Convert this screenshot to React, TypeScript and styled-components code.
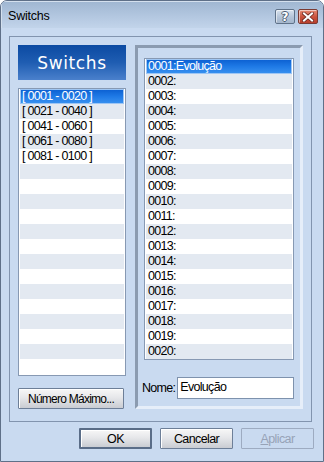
import React from "react";
import styled, { createGlobalStyle, css } from "styled-components";

const GlobalStyle = createGlobalStyle`
  html, body { margin: 0; padding: 0; background: #ffffff; }
  * { box-sizing: border-box; }
`;

const listFont = `"Liberation Sans", Arial, sans-serif`;

const Window = styled.div`
  width: 324px;
  height: 462px;
  border: 1px solid #5f7088;
  border-radius: 7px 7px 0 0;
  overflow: hidden;
  display: flex;
  flex-direction: column;
  background: #c9daf0;
`;

const TitleBar = styled.div`
  height: 27px;
  flex: none;
  display: flex;
  align-items: center;
  justify-content: space-between;
  padding: 0 5px 0 7px;
  background: linear-gradient(#9fb6d1, #b4c8e1 60%, #c2d4ea);
  box-shadow: inset 1px 1px 0 #d4e0ee;
`;

const Title = styled.span`
  font-family: "Liberation Sans", Arial, sans-serif;
  font-size: 12.5px;
  letter-spacing: -0.2px;
  color: #000;
  margin-top: 2px;
`;

const TitleButtons = styled.div`
  display: flex;
  gap: 3px;
  margin-top: 4px;
`;

const TitleButton = styled.div<{ $close?: boolean }>`
  width: 20px;
  height: 15px;
  border: 1px solid ${(p) => (p.$close ? "#7a3a32" : "#5f7289")};
  border-radius: 2px;
  display: flex;
  align-items: center;
  justify-content: center;
  background: ${(p) =>
    p.$close
      ? "linear-gradient(#e58a74, #c9503a 55%, #b8402e)"
      : "linear-gradient(#d8e2ee, #b4c4d8 55%, #a4b6cc)"};
  box-shadow: inset 1px 1px 0 rgba(255, 255, 255, 0.55);
`;

const HelpGlyph = styled.span`
  font-family: "DejaVu Sans", sans-serif;
  font-weight: bold;
  font-size: 12px;
  color: #ffffff;
  line-height: 1;
  text-shadow: -1px 0 #4d5d72, 1px 0 #4d5d72, 0 -1px #4d5d72, 0 1px #4d5d72;
`;

const Client = styled.div`
  flex: 1;
  display: flex;
  flex-direction: column;
  padding: 8px 9px 12px 8px;
`;

const GroupBox = styled.div`
  height: 386px;
  margin-right: 2px;
  border: 1px solid #8294ae;
  padding: 8px 8px 12px 8px;
  display: flex;
  gap: 9px;
`;

const LeftColumn = styled.div`
  width: 108px;
  display: flex;
  flex-direction: column;
`;

const Header = styled.div`
  height: 35px;
  display: flex;
  align-items: center;
  justify-content: center;
  background: linear-gradient(#0b4aa2, #1f5db2 50%, #4a80cc);
  color: #ffffff;
  font-family: "DejaVu Sans", sans-serif;
  font-size: 17px;
  letter-spacing: 0.6px;
  padding-top: 1px;
`;

const ListBox = styled.div<{ $h: number }>`
  height: ${(p) => p.$h}px;
  background: #ffffff;
  border: 1px solid #8799b3;
  padding: 0 1px;
  overflow: hidden;
`;

const Row = styled.div<{ $alt: boolean; $sel: boolean }>`
  height: 15px;
  line-height: 15px;
  padding-left: 2px;
  font-family: ${listFont};
  font-size: 12.5px;
  letter-spacing: -0.7px;
  color: #000;
  white-space: nowrap;
  background: ${(p) => (p.$alt ? "#e3e9f1" : "#ffffff")};
  ${(p) =>
    p.$sel &&
    css`
      color: #ffffff;
      background: linear-gradient(#0a5ed0, #1f7ae6 50%, #3a92f0);
      box-shadow: inset 0 0 0 1px #9ec6f4;
    `}
`;

const LeftList = styled(ListBox)`
  margin-top: 8px;
`;

const Button = styled.button<{ $default?: boolean; $disabled?: boolean }>`
  height: 21px;
  width: 73px;
  padding: 0;
  font-family: ${listFont};
  font-size: 12.5px;
  letter-spacing: -0.6px;
  color: #000;
  border: 1px solid #6d7f98;
  border-radius: 1px;
  background: linear-gradient(#f7f7f7, #e6e7ea 45%, #c9ccd2);
  box-shadow: inset 1px 1px 0 #ffffff;
  ${(p) =>
    p.$default &&
    css`
      border: 2px solid #5a6d88;
      box-shadow: inset 1px 1px 0 #ffffff;
    `}
  ${(p) =>
    p.$disabled &&
    css`
      color: #97a3b7;
      border-color: #9dabc1;
      background: #c9daf0;
      box-shadow: none;
    `}
`;

const WideButton = styled(Button)`
  width: 106px;
  margin-top: 12px;
  font-size: 12px;
  letter-spacing: -0.75px;
`;

const RightPanel = styled.div`
  width: 168px;
  border: 3px solid;
  border-color: #8b9bb0 #e6eef9 #e6eef9 #8b9bb0;
  padding: 10px 6px 0 6px;
  display: flex;
  flex-direction: column;
`;

const NameRow = styled.div`
  margin-top: 17px;
  margin-left: -2px;
  display: flex;
  align-items: center;
  gap: 2px;
`;

const Label = styled.span`
  font-family: ${listFont};
  font-size: 12.5px;
  letter-spacing: -0.7px;
  color: #000;
`;

const TextInput = styled.div`
  flex: 1;
  height: 22px;
  background: #ffffff;
  border: 1px solid #7e92ad;
  padding-left: 2px;
  line-height: 19px;
  font-family: ${listFont};
  font-size: 12.5px;
  letter-spacing: -0.7px;
  color: #000;
`;

const ButtonRow = styled.div`
  margin-top: 6px;
  display: flex;
  justify-content: flex-end;
  gap: 8px;
`;

const Underline = styled.span`
  text-decoration: underline;
`;

const ranges = [
  "[ 0001 - 0020 ]",
  "[ 0021 - 0040 ]",
  "[ 0041 - 0060 ]",
  "[ 0061 - 0080 ]",
  "[ 0081 - 0100 ]",
];

const items = Array.from({ length: 20 }, (_, i) => {
  const n = String(i + 1).padStart(4, "0");
  return i === 0 ? `${n}:Evolução` : `${n}:`;
});

export default function App() {
  const leftRows = Array.from({ length: 19 }, (_, i) => ranges[i] ?? "");
  return (
    <>
      <GlobalStyle />
      <Window>
        <TitleBar>
          <Title>Switchs</Title>
          <TitleButtons>
            <TitleButton>
              <HelpGlyph>?</HelpGlyph>
            </TitleButton>
            <TitleButton $close>
              <svg width="12" height="10" viewBox="0 0 12 10">
                <path d="M2 1.5 L10 8.5 M10 1.5 L2 8.5" stroke="#6a2a22" strokeWidth="3.6" strokeLinecap="square" />
                <path d="M2 1.5 L10 8.5 M10 1.5 L2 8.5" stroke="#ffffff" strokeWidth="2" strokeLinecap="square" />
              </svg>
            </TitleButton>
          </TitleButtons>
        </TitleBar>
        <Client>
          <GroupBox>
            <LeftColumn>
              <Header>Switchs</Header>
              <LeftList $h={288}>
                {leftRows.map((t, i) => (
                  <Row key={i} $alt={i % 2 === 1} $sel={i === 0}>
                    {t}
                  </Row>
                ))}
              </LeftList>
              <WideButton>Número Máximo...</WideButton>
            </LeftColumn>
            <RightPanel>
              <ListBox $h={302}>
                {items.map((t, i) => (
                  <Row key={i} $alt={i % 2 === 1} $sel={i === 0}>
                    {t}
                  </Row>
                ))}
              </ListBox>
              <NameRow>
                <Label>Nome:</Label>
                <TextInput>Evolução</TextInput>
              </NameRow>
            </RightPanel>
          </GroupBox>
          <ButtonRow>
            <Button $default>OK</Button>
            <Button>Cancelar</Button>
            <Button $disabled>
              <Underline>A</Underline>plicar
            </Button>
          </ButtonRow>
        </Client>
      </Window>
    </>
  );
}
